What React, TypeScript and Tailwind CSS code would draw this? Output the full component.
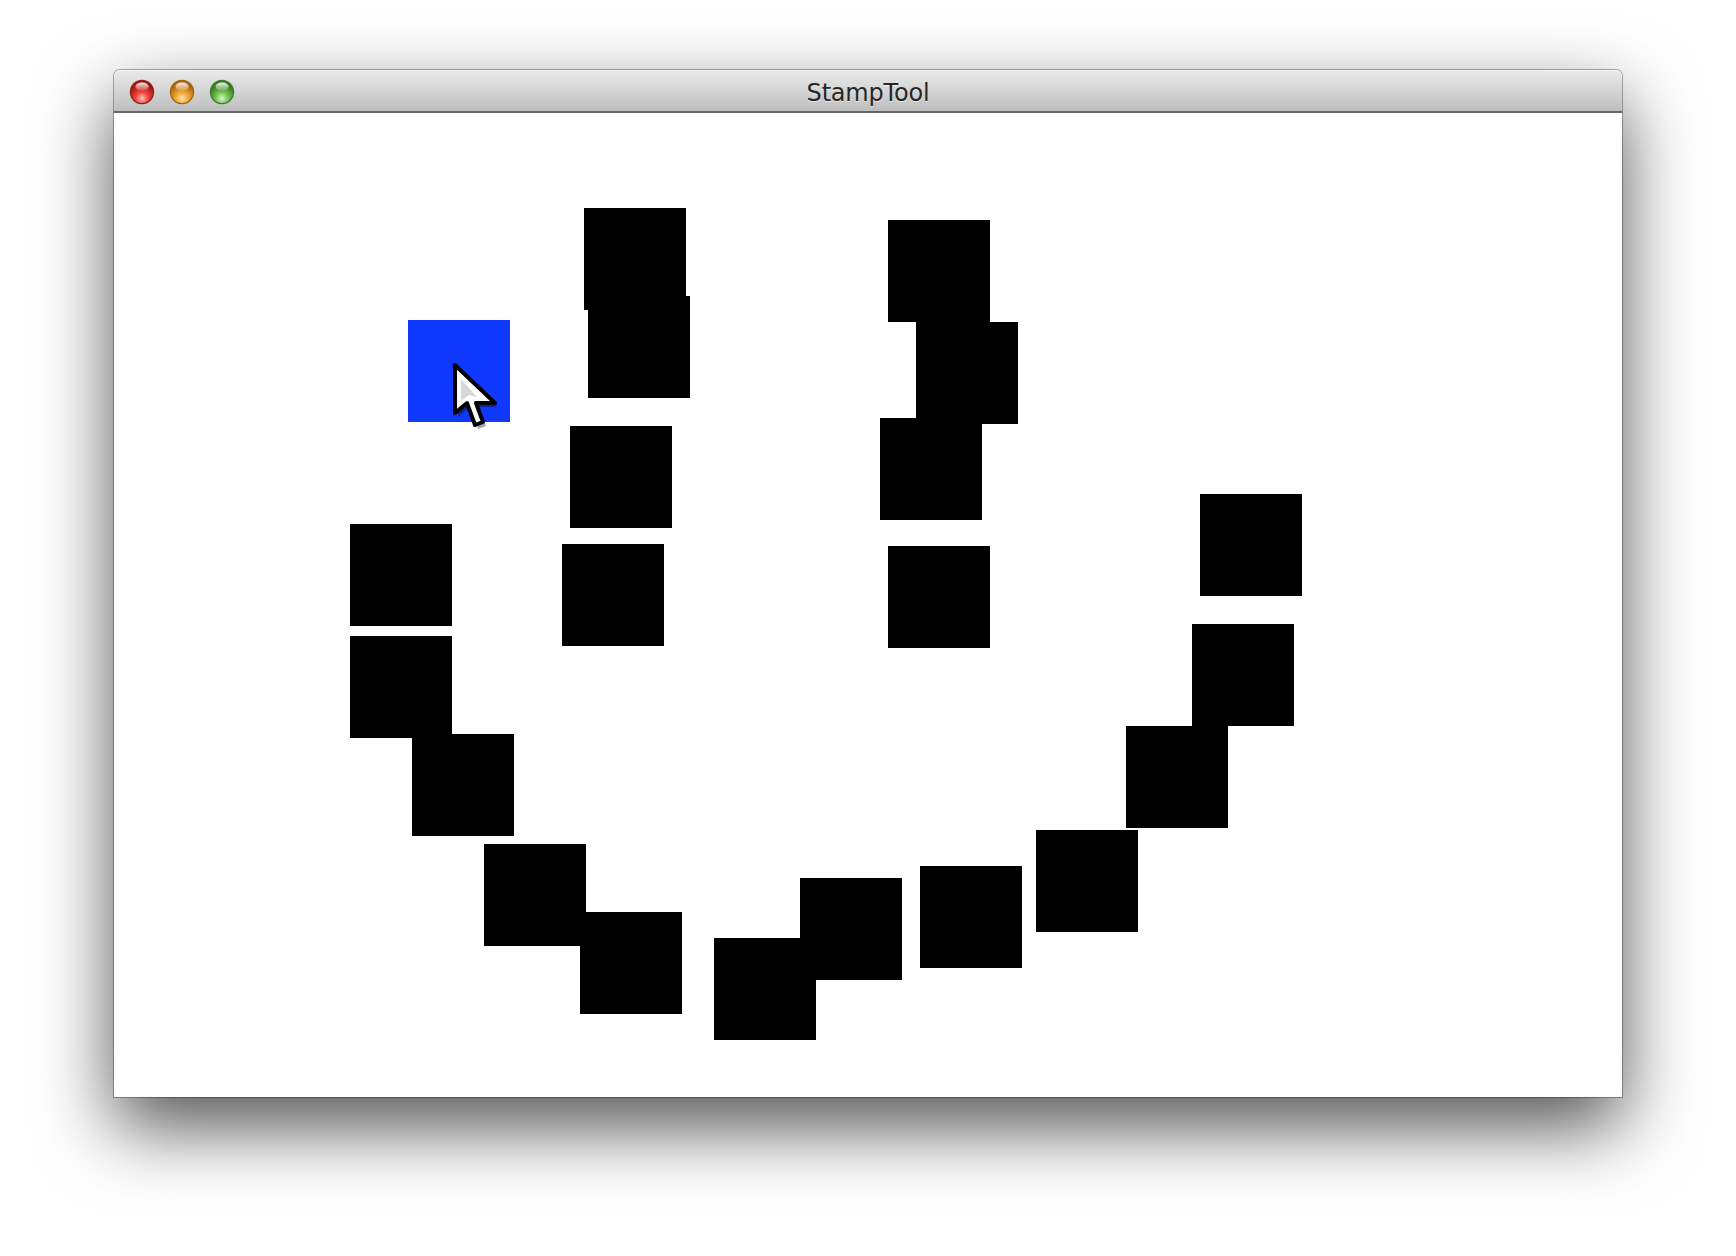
import React from "react";

type Stamp = { x: number; y: number };

// stamp positions inside the canvas, in the order they were clicked
const STAMPS: Stamp[] = [
  { x: 470, y: 95 },
  { x: 474, y: 183 },
  { x: 456, y: 313 },
  { x: 448, y: 431 },
  { x: 236, y: 411 },
  { x: 236, y: 523 },
  { x: 298, y: 621 },
  { x: 370, y: 731 },
  { x: 466, y: 799 },
  { x: 600, y: 825 },
  { x: 686, y: 765 },
  { x: 806, y: 753 },
  { x: 922, y: 717 },
  { x: 1012, y: 613 },
  { x: 1078, y: 511 },
  { x: 1086, y: 381 },
  { x: 774, y: 107 },
  { x: 802, y: 209 },
  { x: 766, y: 305 },
  { x: 774, y: 433 },
];

const LIGHTS = [
  { id: "close", hi: "#ffc2bd", mid: "#f2413a", lo: "#a3150f", rim: "#8f1d17" },
  { id: "min", hi: "#ffe6a8", mid: "#f2a634", lo: "#b0660c", rim: "#9a6412" },
  { id: "max", hi: "#d9f7c4", mid: "#72c04f", lo: "#347a1e", rim: "#3f7a27" },
];

function TrafficLight({ id, hi, mid, lo, rim }: (typeof LIGHTS)[number]) {
  return (
    <svg width="26" height="26" viewBox="0 0 26 26" className="block">
      <defs>
        <radialGradient id={`${id}-body`} cx="50%" cy="78%" r="62%">
          <stop offset="0%" stopColor={hi} />
          <stop offset="45%" stopColor={mid} />
          <stop offset="100%" stopColor={lo} />
        </radialGradient>
        <linearGradient id={`${id}-gloss`} x1="0" y1="0" x2="0" y2="1">
          <stop offset="0%" stopColor="#ffffff" stopOpacity="0.95" />
          <stop offset="100%" stopColor="#ffffff" stopOpacity="0.1" />
        </linearGradient>
      </defs>
      <circle cx="13" cy="13" r="11.6" fill={`url(#${id}-body)`} stroke={rim} strokeWidth="1.2" />
      <ellipse cx="13" cy="7.6" rx="6.6" ry="4.2" fill={`url(#${id}-gloss)`} />
    </svg>
  );
}

function Cursor() {
  return (
    <svg width="50" height="72" viewBox="-4 -4 50 72" className="block">
      <polygon
        points="3,4 3,52 15,42 23,64 31,61 24,42 43,42"
        fill="#000"
        opacity="0.35"
      />
      <polygon
        points="0,0 0,48 12,38 20,60 28,57 21,38 40,38"
        fill="#ffffff"
        stroke="#000"
        strokeWidth="4"
        strokeLinejoin="round"
      />
      <polygon points="6,14 6,36 14,30 22,32" fill="#d8d8d8" />
    </svg>
  );
}

export default function App() {
  return (
    <div className="min-h-[1256px] w-full bg-white pt-[70px] pl-[114px]" style={{ fontFamily: '"DejaVu Sans", "Liberation Sans", sans-serif' }}>
      <div className="w-[1508px] rounded-t-[6px] shadow-[0_30px_75px_rgba(0,0,0,0.68),0_0_0_1px_rgba(0,0,0,0.3)]">
        {/* title bar */}
        <div className="relative flex h-[41px] items-center rounded-t-[6px] border-t border-[#f4f4f4] bg-[linear-gradient(#e9e9e9,#d2d2d2_55%,#bdbdbd)]">
          <div className="flex items-center gap-[14px] pl-[15px] pt-[2px]">
            {LIGHTS.map((l) => (
              <TrafficLight key={l.id} {...l} />
            ))}
          </div>
          <div className="absolute inset-0 flex items-center justify-center pt-[3px] text-[24px] tracking-[-0.2px] text-[#262626] [text-shadow:0_1px_0_rgba(255,255,255,0.6)]">
            StampTool
          </div>
        </div>
        <div className="h-[2px] bg-[#666666]" />

        {/* canvas */}
        <div className="relative h-[984px] overflow-hidden bg-white">
          {STAMPS.map((s, i) => (
            <div key={i} className="absolute h-[102px] w-[102px] bg-black" style={{ left: s.x, top: s.y }} />
          ))}
          <div className="absolute h-[102px] w-[102px] bg-[#1039ff]" style={{ left: 294, top: 207 }} />
          <div className="absolute" style={{ left: 337, top: 248 }}>
            <Cursor />
          </div>
        </div>
      </div>
    </div>
  );
}
